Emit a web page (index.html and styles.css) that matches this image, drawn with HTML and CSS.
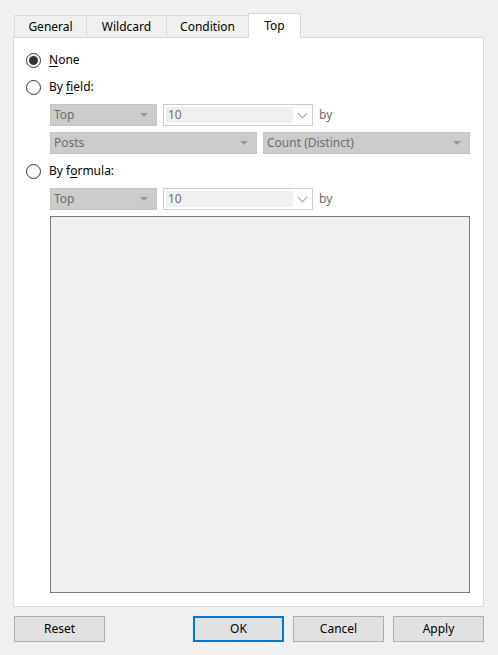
FILE: index.html
```html
<!DOCTYPE html>
<html lang="en">
<head>
    <meta charset="UTF-8">
    <meta name="viewport" content="width=device-width, initial-scale=1.0">
    <title>Filter</title>
    <link rel="stylesheet" href="styles.css">
</head>
<body>
    <div class="dialog">
        <div class="tabs">
            <div class="tab tab-general">General</div>
            <div class="tab tab-wildcard">Wildcard</div>
            <div class="tab tab-condition">Condition</div>
            <div class="tab tab-top active">Top</div>
        </div>
        <div class="panel">
            <div class="radio-row first">
                <span class="radio checked"></span>
                <span class="label"><u>N</u>one</span>
            </div>
            <div class="radio-row">
                <span class="radio"></span>
                <span class="label">By <u>f</u>ield:</span>
            </div>
            <div class="field-row gap-9">
                <div class="select w-top">Top<span class="arrow"></span></div>
                <div class="combo"><span class="combo-input">10</span><span class="chevron"></span></div>
                <span class="by">by</span>
            </div>
            <div class="field-row gap-6">
                <div class="select w-wide">Posts<span class="arrow"></span></div>
                <div class="select w-wide last">Count (Distinct)<span class="arrow"></span></div>
            </div>
            <div class="radio-row gap-9">
                <span class="radio"></span>
                <span class="label">By f<u>o</u>rmula:</span>
            </div>
            <div class="field-row gap-9">
                <div class="select w-top">Top<span class="arrow"></span></div>
                <div class="combo"><span class="combo-input">10</span><span class="chevron"></span></div>
                <span class="by">by</span>
            </div>
            <div class="formula"></div>
        </div>
        <div class="buttons">
            <button class="btn">Reset</button>
            <div class="spacer"></div>
            <button class="btn default">OK</button>
            <button class="btn">Cancel</button>
            <button class="btn">Apply</button>
        </div>
    </div>
</body>
</html>
```

FILE: styles.css
```css
html, body{
    margin: 0;
    background: #f0f0f0;
}
body{
    font-family: "Noto Sans", "Open Sans", sans-serif;
    font-size: 12px;
    color: #000;
}
.dialog{
    width: 498px;
    height: 655px;
    box-sizing: border-box;
    padding: 13px 14px 0 13px;
}
.tabs{
    display: flex;
    align-items: flex-end;
    height: 24px;
    margin-left: 1px;
    position: relative;
    z-index: 1;
}
.tab{
    box-sizing: border-box;
    height: 22px;
    border: 1px solid #d9d9d9;
    border-bottom: 0;
    margin-right: -1px;
    background: #f0f0f0;
    text-align: center;
    line-height: 21px;
}
.tab-general{ width: 73px; }
.tab-wildcard{ width: 81px; }
.tab-condition{ width: 83px; }
.tab-top{ width: 53px; }
.tab.active{
    height: 25px;
    margin-bottom: -1px;
    background: #fff;
    line-height: 24px;
}
.panel{
    box-sizing: border-box;
    width: 471px;
    height: 570px;
    border: 1px solid #d9d9d9;
    background: #fff;
    padding: 0 12px;
    display: flex;
    flex-direction: column;
}
.radio-row{
    display: flex;
    align-items: center;
    height: 16px;
    margin-top: 11px;
    line-height: 14px;
}
.radio-row.first{
    margin-top: 14px;
}
.radio{
    box-sizing: border-box;
    flex-shrink: 0;
    width: 15px;
    height: 15px;
    border: 1px solid #333;
    border-radius: 50%;
    display: flex;
    align-items: center;
    justify-content: center;
    margin-right: 8px;
}
.radio.checked::after{
    content: "";
    width: 9px;
    height: 9px;
    border-radius: 50%;
    background: #333;
}
.label{
    margin-top: -1px;
}
.label u{
    text-underline-offset: 2px;
}
.field-row{
    display: flex;
    align-items: center;
    margin-left: 24px;
    height: 22px;
}
.gap-9{ margin-top: 9px; }
.gap-6{ margin-top: 6px; }
.select{
    box-sizing: border-box;
    flex-shrink: 0;
    height: 22px;
    background: #cccccc;
    border: 1px solid #c4c4c4;
    color: #6d6d6d;
    padding-left: 3px;
    line-height: 19px;
    position: relative;
    margin-right: 6px;
}
.select.last{
    margin-right: 0;
}
.w-top{ width: 107px; }
.w-wide{ width: 207px; }
.arrow{
    position: absolute;
    right: 8px;
    top: 8px;
    width: 0;
    height: 0;
    border-left: 4px solid transparent;
    border-right: 4px solid transparent;
    border-top: 4px solid #9a9a9a;
}
.combo{
    box-sizing: border-box;
    flex-shrink: 0;
    width: 150px;
    height: 22px;
    background: #fff;
    border: 1px solid #cccccc;
    padding: 2px;
    display: flex;
    align-items: center;
    margin-right: 6px;
}
.combo-input{
    box-sizing: border-box;
    width: 127px;
    height: 16px;
    background: #f0f0f0;
    color: #6d6d6d;
    padding-left: 2px;
    line-height: 16px;
}
.chevron{
    width: 6px;
    height: 6px;
    border-right: 1px solid #a0a0a0;
    border-bottom: 1px solid #a0a0a0;
    transform: rotate(45deg);
    margin: -4px 0 0 6px;
}
.by{
    color: #6d6d6d;
    margin-top: -2px;
}
.formula{
    box-sizing: border-box;
    margin: 6px 0 0 24px;
    width: 420px;
    height: 377px;
    border: 1px solid #7a7a7a;
    background: #f0f0f0;
}
.buttons{
    display: flex;
    margin-top: 9px;
    padding-left: 1px;
}
.spacer{
    flex: 1;
}
.btn{
    box-sizing: border-box;
    width: 91px;
    height: 26px;
    background: #e1e1e1;
    border: 1px solid #adadad;
    font-family: inherit;
    font-size: 12px;
    color: #000;
    padding: 0 0 2px;
    margin-left: 9px;
}
.btn:first-child{
    margin-left: 0;
}
.btn.default{
    border: 2px solid #0078d7;
}
```
